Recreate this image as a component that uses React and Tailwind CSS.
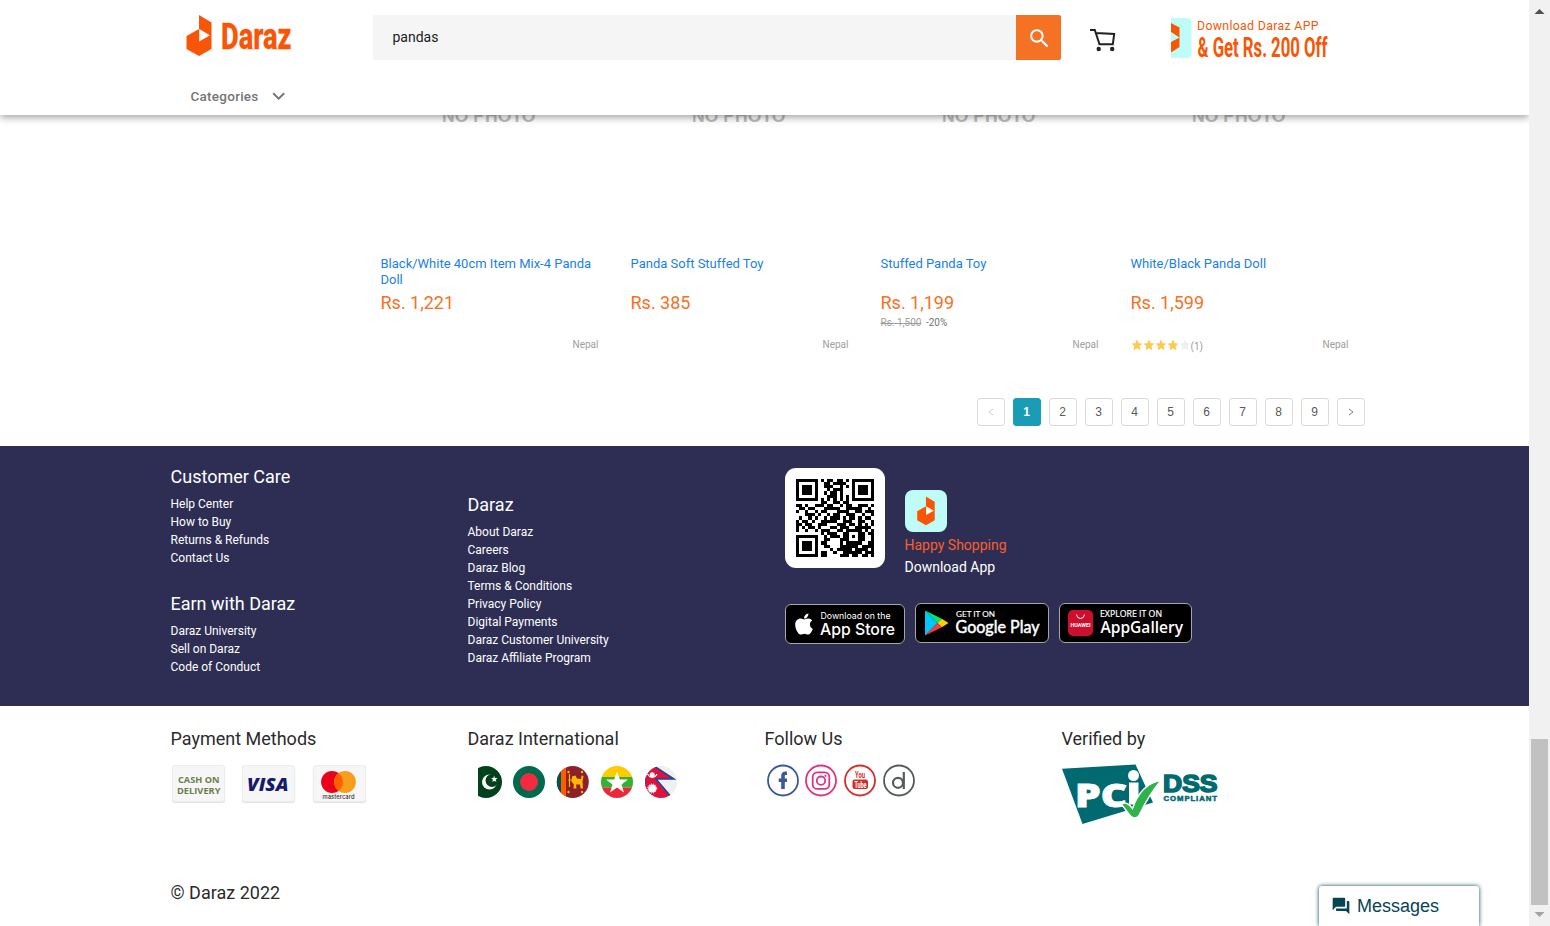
import React from "react";
import { MdSearch, MdQuestionAnswer } from "react-icons/md";
import { FaApple } from "react-icons/fa";

const products = [
  { name: "Black/White 40cm Item Mix-4 Panda Doll", price: "Rs. 1,221" },
  { name: "Panda Soft Stuffed Toy", price: "Rs. 385" },
  { name: "Stuffed Panda Toy", price: "Rs. 1,199", old: "Rs. 1,500", off: "-20%" },
  { name: "White/Black Panda Doll", price: "Rs. 1,599", rating: 4, reviews: 1 },
];

const care = ["Help Center", "How to Buy", "Returns & Refunds", "Contact Us"];
const earn = ["Daraz University", "Sell on Daraz", "Code of Conduct"];
const about = [
  "About Daraz",
  "Careers",
  "Daraz Blog",
  "Terms & Conditions",
  "Privacy Policy",
  "Digital Payments",
  "Daraz Customer University",
  "Daraz Affiliate Program",
];

const qrRows = [
  "1111111010110110101111111",
  "1000001001101111001000001",
  "1011101001110010101011101",
  "1011101000101110001011101",
  "1011101001011010001011101",
  "1000001000111010101000001",
  "1111111010101010101111111",
  "0000000011001101100000000",
  "1101001110110010110011101",
  "0110110001111100111110010",
  "1001001011000111100110111",
  "0001110100101100111001001",
  "0100101001011101011010110",
  "1011010011111001110011001",
  "1101100111000111011010101",
  "1010110100011011100111110",
  "1001001011100110111110101",
  "0000000010111001100011011",
  "1111111001011101101011001",
  "1000001001100011100011001",
  "1011101011000010111110011",
  "1011101001100011111101111",
  "1011101000010111110111101",
  "1000001011001001111110111",
  "1111111011000011101101101",
];

const Mark = () => (
  <>
    <path d="M12.500 0 L25 7.500 V34 L12.500 41 L0 34 V21 L12.500 14 Z" fill="#f85606" />
    <path d="M12.700 14 L23.500 20.200 L12.700 26.500 Z" fill="#fff" />
  </>
);

const Logo = () => (
  <svg width="110" height="48" viewBox="0 0 110 48">
    <g transform="translate(0.500 0)"><Mark /></g>
    <text x="35" y="34" fontFamily="Roboto" fontWeight="800" fontSize="37.500" fill="#f85606" stroke="#f85606" strokeWidth="0.300" textLength="70.500" lengthAdjust="spacingAndGlyphs">
      Daraz
    </text>
  </svg>
);

const Cart = () => (
  <svg width="26" height="23" viewBox="0 0 26 23" fill="none" stroke="#212121" strokeWidth="2">
    <path d="M0 1 H4.800 L9.500 15.300 H22.800 L24.200 4.900 L6.200 4" />
    <circle cx="8.700" cy="20" r="2.200" fill="#212121" stroke="none" />
    <circle cx="22.200" cy="20" r="2.200" fill="#212121" stroke="none" />
  </svg>
);

const Promo = () => (
  <svg width="162" height="50" viewBox="0 0 162 50">
    <path d="M0 0 H16 Q20.500 0 20.500 4.500 V35.500 Q20.500 40 16 40 H0 Z" fill="#bffcf8" />
    <path d="M0 5 L8.500 9.500 V29 L0 34.500 Z" fill="#f85606" />
    <path d="M0 14 L8.500 19.500 L0 24 Z" fill="#bffcf8" />
    <text x="26" y="12.200" fontFamily="Roboto" fontSize="12.300" fill="#f85606" textLength="121.500">Download Daraz APP</text>
    <text x="26.500" y="38.500" fontFamily="Roboto" fontWeight="700" fontSize="28" fill="#f85606" textLength="130" lengthAdjust="spacingAndGlyphs">&amp; Get Rs. 200 Off</text>
  </svg>
);

const Header = () => (
  <header className="relative z-10 h-[115px] shrink-0 bg-white shadow-[0_2px_8px_rgba(0,0,0,0.4)]">
    <div className="flex h-[60px] items-start pl-[186px] pt-[15px]">
      <Logo />
      <div className="ml-[77px] flex h-[45px] w-[688px] overflow-hidden rounded-[2px] bg-[#f5f5f5]">
        <div className="flex flex-1 items-center pb-px pl-[19.500px] text-sm text-[#212121]">pandas</div>
        <div className="flex w-[45px] items-center justify-center bg-[#f57224] pl-px pt-px">
          <MdSearch className="size-[25px] text-white" />
        </div>
      </div>
      <div className="ml-[29px] mt-[14px]"><Cart /></div>
      <div className="ml-[55px] mt-[3px]"><Promo /></div>
    </div>
    <div className="flex items-center gap-[13.500px] pl-[190.500px] pt-[26px] text-[13.500px] font-medium leading-5 tracking-[0.25px] text-[#757575]">
      <span>Categories</span>
      <svg width="14" height="9" fill="none" stroke="currentColor" strokeWidth="2"><path d="M1.200 1.200 L6.700 6.700 L12.200 1.200" /></svg>
    </div>
  </header>
);

const Stars = ({ count }) => (
  <div className="flex">
    {[0, 1, 2, 3, 4].map((i) => (
      <svg key={i} width="12" height="12" viewBox="0 0 24 24" fill={i < count ? "#fbca4f" : "#eeeef6"}>
        <path d="M12 1 L15.300 8.300 L23 9.200 L17.200 14.500 L18.800 22.500 L12 18.500 L5.200 22.500 L6.800 14.500 L1 9.200 L8.700 8.300 Z" />
      </svg>
    ))}
  </div>
);

const Product = ({ p }) => (
  <div className="flex w-[250px] flex-col pl-[7.500px] pr-[24.500px]">
    <div className="-mt-[9px] h-[150px] pl-[61.500px] font-['Liberation_Sans'] text-[17.600px] font-bold leading-[20px] text-[#bdbdbd]">NO PHOTO</div>
    <div className="h-[35px] text-[13px] leading-4 text-[#1a7fe8]">{p.name}</div>
    <div className="h-[24px] text-[18px] leading-[24px] text-[#f57224]">{p.price}</div>
    <div className="h-[15px] text-[10px] leading-[15px] text-[#757575]">
      {p.old && <><span className="text-[#9e9e9e] line-through">{p.old}</span><span className="ml-[4.500px]">{p.off}</span></>}
    </div>
    <div className="mt-[6px] flex h-[16px] items-center justify-between text-[10px] text-[#9e9e9e]">
      {p.rating ? <div className="flex items-center pt-0.5"><Stars count={p.rating} /><span className="pt-0.5">({p.reviews})</span></div> : <span />}
      <span>Nepal</span>
    </div>
  </div>
);

const Pager = () => {
  const base = "flex size-7 items-center justify-center rounded-[3px] border pr-px font-['Liberation_Sans'] text-xs";
  return (
    <div className="ml-[977px] mt-[46px] flex gap-2">
      <div className={`${base} border-[#d9d9d9] text-[#cccccc]`}><svg width="6" height="8" fill="none" stroke="currentColor"><path d="M5 1 L1 4 L5 7" /></svg></div>
      {[1, 2, 3, 4, 5, 6, 7, 8, 9].map((n) => (
        <div key={n} className={n === 1 ? `${base} border-[#1a9cb7] bg-[#1a9cb7] font-bold text-white` : `${base} border-[#d9d9d9] text-[#595959]`}>{n}</div>
      ))}
      <div className={`${base} border-[#d9d9d9] text-[#808080]`}><svg width="6" height="8" fill="none" stroke="currentColor"><path d="M1 1 L5 4 L1 7" /></svg></div>
    </div>
  );
};

const LinkList = ({ title, items }) => (
  <div>
    <h3 className="mb-[5px] text-[18px] leading-[26px]">{title}</h3>
    {items.map((t) => (
      <div key={t} className="text-xs leading-[18px]">{t}</div>
    ))}
  </div>
);

const Qr = () => (
  <div className="flex size-[100px] items-center justify-center rounded-[11px] bg-white">
    <svg width="78" height="78" viewBox="0 0 25 25" shapeRendering="crispEdges">
      {qrRows.map((row, y) => row.split("").map((c, x) => (c === "1" ? <rect key={`${x}-${y}`} x={x} y={y} width="1" height="1" /> : null)))}
    </svg>
  </div>
);

const AppStore = () => (
  <div className="mt-px flex h-[40px] w-[120px] items-center rounded-md border border-[#a6a6a6] bg-black pl-1.5 text-white">
    <FaApple className="size-[24px]" />
    <svg width="84" height="38" className="ml-[3px]" fill="#fff" fontFamily="Inter">
      <text x="1.500" y="14" fontSize="8.500" textLength="70" lengthAdjust="spacingAndGlyphs">Download on the</text>
      <text x="1" y="29.500" fontSize="16.500" fontWeight="500" textLength="75" lengthAdjust="spacingAndGlyphs">App Store</text>
    </svg>
  </div>
);

const GooglePlay = () => (
  <div className="flex h-[40px] w-[134px] items-center rounded-md border border-[#a6a6a6] bg-black pl-[9px] text-white">
    <svg width="24" height="26" viewBox="0 0 24 26">
      <path d="M0 0.500 L12.500 13 L0 25.500 Z" fill="#00c8fa" />
      <path d="M0 0.500 L16.800 8.700 L12.500 13 Z" fill="#00e676" />
      <path d="M16.800 8.700 L23.500 13 L16.800 17.300 L12.500 13 Z" fill="#ffcf00" />
      <path d="M0 25.500 L16.800 17.300 L12.500 13 Z" fill="#ff3a44" />
    </svg>
    <svg width="92" height="38" className="ml-[5px]" fill="#fff" fontFamily="Lato">
      <text x="2" y="12.500" fontSize="8" stroke="#fff" strokeWidth="0.150" textLength="39" lengthAdjust="spacingAndGlyphs">GET IT ON</text>
      <text x="1.500" y="29" fontSize="17" stroke="#fff" strokeWidth="0.500" textLength="84" lengthAdjust="spacingAndGlyphs">Google Play</text>
    </svg>
  </div>
);

const AppGallery = () => (
  <div className="flex h-[40px] w-[133px] items-center rounded-md border border-[#a6a6a6] bg-black pl-2 text-white">
    <svg width="25" height="26" viewBox="0 0 25 26">
      <rect width="25" height="26" rx="5" fill="#ce0e2d" />
      <path d="M8.500 4.500 Q9 8.500 12.500 8.500 Q16 8.500 16.500 4.500" fill="none" stroke="#fff" />
      <text x="2.500" y="17" fontFamily="Roboto" fontWeight="700" fontSize="4.800" fill="#fff" textLength="20" lengthAdjust="spacingAndGlyphs">HUAWEI</text>
    </svg>
    <svg width="92" height="38" className="ml-[6px]" fill="#fff" fontFamily="Open Sans">
      <text x="1" y="12.500" fontSize="8.300" stroke="#fff" strokeWidth="0.200" textLength="62" lengthAdjust="spacingAndGlyphs">EXPLORE IT ON</text>
      <text x="1.500" y="29" fontSize="15.500" fontWeight="600" textLength="82.500" lengthAdjust="spacingAndGlyphs">AppGallery</text>
    </svg>
  </div>
);

const AppPanel = () => (
  <div className="pl-[20.500px] pt-[22px]">
    <div className="flex gap-5">
      <Qr />
      <div className="-ml-[0.500px] pt-[22px]">
        <svg width="42" height="42" viewBox="0 0 42 42">
          <rect width="42" height="42" rx="8" fill="#bffcf8" />
          <g transform="translate(12.200 6.500) scale(0.700)"><Mark /></g>
        </svg>
        <div className="mt-[2px] text-sm leading-[22px] text-[#f85f2c]">Happy Shopping</div>
        <div className="text-sm leading-[22px] text-white">Download App</div>
      </div>
    </div>
    <div className="mt-[25px] flex gap-[10px]">
      <AppStore />
      <GooglePlay />
      <AppGallery />
    </div>
  </div>
);

const Payments = () => {
  const card = "flex h-[37px] w-[53px] items-center justify-center rounded-[3px] border border-[#ececec] bg-[#f6f6f6] shadow-[0_1px_1px_rgba(0,0,0,0.12)]";
  return (
    <div className="ml-[1.500px] mt-[13px] flex gap-[17.300px]">
      <div className={card}>
        <svg width="50" height="34" fontFamily="Open Sans" fontWeight="700" fontSize="9" fill="#6b7f4e">
          <text x="4" y="16" textLength="41.500" lengthAdjust="spacingAndGlyphs">CASH ON</text>
          <text x="3" y="27" textLength="43.500" lengthAdjust="spacingAndGlyphs">DELIVERY</text>
        </svg>
      </div>
      <div className={card}>
        <svg width="46" height="22"><text x="1" y="17.500" fontFamily="Open Sans" fontStyle="italic" fontWeight="800" fontSize="18" fill="#141b6e" textLength="41.500" lengthAdjust="spacingAndGlyphs">VISA</text></svg>
      </div>
      <div className={card}>
        <svg width="40" height="34">
          <circle cx="13" cy="15" r="10.900" fill="#eb001b" />
          <circle cx="26" cy="15" r="10.900" fill="#f79e1b" />
          <path d="M19.500 6.250 A10.900 10.900 0 0 1 19.500 23.750 A10.900 10.900 0 0 1 19.500 6.250" fill="#ff5f00" />
          <text x="3.500" y="31.500" fontFamily="Inter" fontWeight="500" fontSize="5.800" fill="#333" textLength="32">mastercard</text>
        </svg>
      </div>
    </div>
  );
};

const Flags = () => (
  <svg className="ml-[2.500px] mt-[12px]" width="210" height="36" viewBox="470 764 210 36">
    <defs>
      {[486, 529, 572.8, 617, 661].map((c, i) => (
        <clipPath key={i} id={`flag${i}`}><circle cx={c} cy="782" r="16" /></clipPath>
      ))}
    </defs>
    <g clipPath="url(#flag0)">
      <path d="M470 766 H478 V798 H470 Z" fill="#fdfdfd" />
      <path d="M478 766 H502 V798 H478 Z" fill="#01411c" />
      <circle cx="489.500" cy="782" r="7.500" fill="#fff" />
      <circle cx="492" cy="780.500" r="6.500" fill="#01411c" />
      <path d="M494 775.500 L495 778 L497.500 778 L495.600 779.700 L496.500 782 L494.300 780.700 L492.300 782 L492.900 779.600 L491 778.200 L493.500 778 Z" fill="#fff" />
    </g>
    <g clipPath="url(#flag1)"><rect x="513" y="766" width="32" height="32" fill="#006a4e" /><circle cx="529" cy="782" r="9" fill="#f42a41" /></g>
    <g clipPath="url(#flag2)">
      <rect x="556" y="766" width="34" height="32" fill="#8d2029" />
      <rect x="556" y="766" width="5" height="32" fill="#00534e" />
      <rect x="561" y="766" width="5" height="32" fill="#ff5b00" />
      <path d="M569.500 774 V787 M568.300 780 H572" fill="none" stroke="#ffb700" strokeWidth="1.200" />
      <path d="M572 776.500 L575.500 775.500 L577 778.500 L581 779 L581.500 775.500 L583.500 776 L582.500 781.500 L583 788.500 H580.500 L580 784.500 H576 L576.500 788.500 H573.500 L573.800 784 L571.500 782 Z" fill="#ffb700" />
      <circle cx="568.500" cy="772" r="1.200" fill="#ffb700" /><circle cx="582" cy="772" r="1.200" fill="#ffb700" /><circle cx="568.500" cy="792" r="1.200" fill="#ffb700" /><circle cx="582" cy="792" r="1.200" fill="#ffb700" />
    </g>
    <g clipPath="url(#flag3)">
      <rect x="601" y="766" width="32" height="11" fill="#fecb00" /><rect x="601" y="777" width="32" height="10.500" fill="#34b233" /><rect x="601" y="787.500" width="32" height="11" fill="#ea2839" />
      <path d="M617 771.500 L619.900 779.500 H628 L621.500 784.500 L624 792.500 L617 787.600 L610 792.500 L612.500 784.500 L606 779.500 H614.100 Z" fill="#fff" />
    </g>
    <g clipPath="url(#flag4)">
      <rect x="645" y="766" width="32" height="32" fill="#f0f0f0" />
      <path d="M645 760 L674 779 H656 L673 799 H645 Z" fill="#dc143c" stroke="#17479e" strokeWidth="1.500" />
      <path d="M647.500 774 A5 5 0 0 0 657 774 A4.800 3.200 0 0 1 647.500 774 Z" fill="#fff" stroke="#fff" />
      <circle cx="652.200" cy="774.800" r="2.500" fill="#fff" />
      <circle cx="652.200" cy="788.500" r="4" fill="#fff" /><circle cx="652.200" cy="788.500" r="4.500" fill="none" stroke="#fff" strokeDasharray="1.200 1.200" />
    </g>
  </svg>
);

const Social = () => (
  <svg className="ml-[2px] mt-[11px]" width="150" height="34" viewBox="767 763 150 34" fill="none" strokeWidth="1.800">
    <circle cx="783" cy="780.500" r="15" stroke="#3b5998" />
    <path d="M787 773.200 H785.500 Q783 773.200 783 776 V789 M778.700 780.200 H787" stroke="#3b5998" strokeWidth="3.600" />
    <circle cx="821" cy="780.500" r="15" stroke="#dd3585" />
    <rect x="812.700" y="772.300" width="16.600" height="16.600" rx="4.500" stroke="#dd3585" />
    <circle cx="821" cy="780.700" r="4.200" stroke="#dd3585" /><circle cx="825.500" cy="775.800" r="1.100" fill="#dd3585" stroke="none" />
    <circle cx="860" cy="780.500" r="15" stroke="#d0302b" />
    <text x="855" y="778" fontFamily="Roboto" fontWeight="700" fontSize="9" fill="#d0302b" textLength="10" lengthAdjust="spacingAndGlyphs">You</text>
    <rect x="852.500" y="779.500" width="15.500" height="9.500" rx="2" fill="#d0302b" />
    <text x="854.500" y="787.500" fontFamily="Roboto" fontWeight="700" fontSize="8.500" fill="#fff" textLength="12" lengthAdjust="spacingAndGlyphs">Tube</text>
    <circle cx="899" cy="780.500" r="15" stroke="#555b5b" />
    <circle cx="898" cy="782.800" r="5" stroke="#555b5b" strokeWidth="2.200" /><path d="M903.800 772 V789" stroke="#555b5b" strokeWidth="2.200" />
  </svg>
);

const Pci = () => (
  <svg className="mt-[12px]" width="158" height="62" viewBox="1062 763.500 158 62">
    <path d="M1062 768.300 L1135.500 764 L1153 802 L1082.500 823.500 Z" fill="#006a70" />
    <text x="1075" y="806" fontFamily="Open Sans" fontWeight="800" fontSize="31.500" fill="#fff" stroke="#fff" strokeWidth="0.800" textLength="52" lengthAdjust="spacingAndGlyphs">PC</text>
    <circle cx="1133.500" cy="775" r="5.500" fill="#fff" />
    <rect x="1129" y="782" width="9.500" height="22" fill="#fff" />
    <path d="M1121.500 804 Q1127 800 1132.500 808 Q1141 783 1161 780 Q1149 794 1139 815 Q1135 820 1130 815 Z" fill="#2eb34b" stroke="#fff" strokeWidth="1.400" />
    <text x="1163" y="791.500" fontFamily="Liberation Sans" fontWeight="700" fontSize="24" fill="#006a70" stroke="#006a70" strokeWidth="1.600" textLength="54.500" lengthAdjust="spacingAndGlyphs">DSS</text>
    <text x="1163.500" y="800.700" fontFamily="Liberation Sans" fontWeight="700" fontSize="7.800" fill="#006a70" stroke="#006a70" strokeWidth="0.500" textLength="53.500">COMPLIANT</text>
  </svg>
);

const Info = ({ title, children }) => (
  <div className="w-[297px]">
    <h3 className="text-[18px] leading-[26px]">{title}</h3>
    {children}
  </div>
);

const Scrollbar = () => (
  <div className="flex w-[21px] shrink-0 flex-col items-center justify-between bg-[#f1f1f1]">
    <svg width="21" height="20"><path d="M5.500 14 L10.500 9 L15.500 14 Z" fill="#505050" /></svg>
    <div className="flex flex-col items-center">
      <div className="h-[166px] w-[17px] bg-[#c1c1c1]" />
      <svg width="21" height="21"><path d="M5.500 7 H15.500 L10.500 12 Z" fill="#a3a3a3" /></svg>
    </div>
  </div>
);

export default function App() {
  return (
    <div className="flex h-[926px] w-[1550px] overflow-hidden bg-white font-['Roboto',sans-serif]">
      <main className="relative flex w-[1529px] flex-col overflow-hidden">
        <Header />
        <section className="h-[331px] shrink-0">
          <div className="flex pl-[373px]">
            {products.map((p) => <Product key={p.name} p={p} />)}
          </div>
          <Pager />
        </section>
        <footer className="flex h-[260px] shrink-0 bg-[#2e2e54] pl-[170.500px] text-white">
          <div className="flex w-[297px] flex-col gap-6 pt-[18px]">
            <LinkList title="Customer Care" items={care} />
            <LinkList title="Earn with Daraz" items={earn} />
          </div>
          <div className="w-[297px] pt-[46px]"><LinkList title="Daraz" items={about} /></div>
          <AppPanel />
        </footer>
        <section className="flex h-[154px] shrink-0 pl-[170.500px] pt-[20px] text-[#2b2b2b]">
          <Info title="Payment Methods"><Payments /></Info>
          <Info title="Daraz International"><Flags /></Info>
          <Info title="Follow Us"><Social /></Info>
          <Info title="Verified by"><Pci /></Info>
        </section>
        <div className="pl-[170.500px] pt-[20px] text-[18px] leading-[26px] text-[#2b2b2b]">© Daraz 2022</div>
        <div className="absolute bottom-0 right-[50px] flex h-[40px] w-[160px] items-center gap-1.5 rounded-t-[3px] bg-white pl-[12px] font-['Liberation_Sans'] text-[18px] text-[#064454] shadow-[0_0_4px_#064454]">
          <MdQuestionAnswer className="size-5" />
          <span>Messages</span>
        </div>
      </main>
      <Scrollbar />
    </div>
  );
}
